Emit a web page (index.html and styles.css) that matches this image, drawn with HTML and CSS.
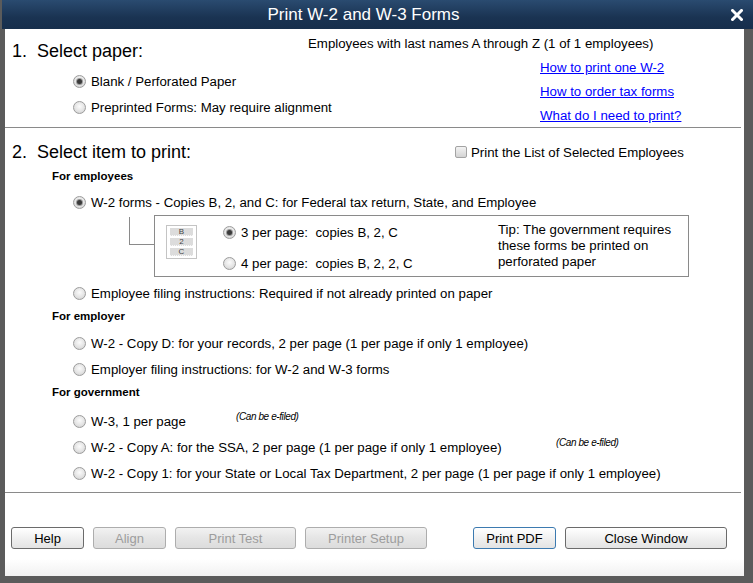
FILE: index.html
```html
<!DOCTYPE html>
<html>
<head>
<meta charset="utf-8">
<link rel="stylesheet" href="styles.css">
</head>
<body>
<div class="frame">
  <div class="titlebar">
    <div class="title">Print W-2 and W-3 Forms</div>
    <div class="close">
      <svg width="12" height="12" viewBox="0 0 12 12"><path d="M1.5 1.5 L10.5 10.5 M10.5 1.5 L1.5 10.5" stroke="#fff" stroke-width="3" stroke-linecap="square"/></svg>
    </div>
  </div>
  <div class="content">
    <section class="sec1">
      <div class="paper">
        <h2 class="heading">1.&nbsp; Select paper:</h2>
        <div class="opt first"><span class="radio checked"></span><span>Blank / Perforated Paper</span></div>
        <div class="opt"><span class="radio"></span><span>Preprinted Forms: May require alignment</span></div>
      </div>
      <div class="info">
        <div class="emp">Employees with last names A through Z (1 of 1 employees)</div>
        <div class="links">
          <a href="#">How to print one W-2</a>
          <a href="#">How to order tax forms</a>
          <a href="#">What do I need to print?</a>
        </div>
      </div>
    </section>
    <hr class="sep">
    <section class="sec2">
      <div class="head2">
        <h2 class="heading">2.&nbsp; Select item to print:</h2>
        <div class="listopt"><span class="check"></span><span>Print the List of Selected Employees</span></div>
      </div>
      <div class="group g-emp">For employees</div>
      <div class="opt o-w2"><span class="radio checked"></span><span>W-2 forms - Copies B, 2, and C: for Federal tax return, State, and Employee</span></div>
      <div class="subrow">
        <div class="connector"></div>
        <div class="subbox">
          <div class="formicon">
            <div class="fi-row">B</div>
            <div class="fi-row">2</div>
            <div class="fi-row">C</div>
          </div>
          <div class="perpage">
            <div class="opt"><span class="radio checked"></span><span>3 per page:&nbsp; copies B, 2, C</span></div>
            <div class="opt"><span class="radio"></span><span>4 per page:&nbsp; copies B, 2, 2, C</span></div>
          </div>
          <div class="tip">Tip: The government requires<br>these forms be printed on<br>perforated paper</div>
        </div>
      </div>
      <div class="opt o-efi"><span class="radio"></span><span>Employee filing instructions: Required if not already printed on paper</span></div>
      <div class="group g-er">For employer</div>
      <div class="opt o-d"><span class="radio"></span><span>W-2 - Copy D: for your records, 2 per page (1 per page if only 1 employee)</span></div>
      <div class="opt"><span class="radio"></span><span>Employer filing instructions: for W-2 and W-3 forms</span></div>
      <div class="group g-gov">For government</div>
      <div class="opt o-w3"><span class="radio"></span><span class="lbl-w3">W-3, 1 per page</span><span class="efile">(Can be e-filed)</span></div>
      <div class="opt"><span class="radio"></span><span class="lbl-a">W-2 - Copy A: for the SSA, 2 per page (1 per page if only 1 employee)</span><span class="efile">(Can be e-filed)</span></div>
      <div class="opt"><span class="radio"></span><span>W-2 - Copy 1: for your State or Local Tax Department, 2 per page (1 per page if only 1 employee)</span></div>
    </section>
    <hr class="sep">
    <footer class="buttons">
      <button class="btn b-help">Help</button>
      <button class="btn b-align" disabled>Align</button>
      <button class="btn b-test" disabled>Print Test</button>
      <button class="btn b-setup" disabled>Printer Setup</button>
      <button class="btn b-pdf focus">Print PDF</button>
      <button class="btn b-close">Close Window</button>
    </footer>
  </div>
</div>
</body>
</html>
```

FILE: styles.css
```css
* { box-sizing: border-box; }
html, body { margin: 0; padding: 0; }
body {
  width: 753px;
  height: 583px;
  background: #5b5b5b;
  font-family: "Liberation Sans", Arial, sans-serif;
  font-size: 13.25px;
  color: #000;
  overflow: hidden;
}
.frame { width: 753px; height: 583px; display: flex; flex-direction: column; }
.titlebar {
  height: 29px;
  display: flex;
  align-items: center;
  background: linear-gradient(#2a4b70, #1a3352 60%, #172f4c);
  margin-left: 2px;
}
.title {
  flex: 1;
  text-align: center;
  color: #fff;
  font-size: 17px;
}
.close { width: 28px; display: flex; justify-content: center; padding-right: 4px; }
.close svg { display: block; }
.content {
  margin: 0 9px 0 5px;
  height: 547px;
  background: linear-gradient(#fff 0, #fff 530px, #f1f1f1 547px);
  display: flex;
  flex-direction: column;
}
.heading {
  margin: 0;
  font-weight: normal;
  font-size: 18px;
  line-height: 20px;
  white-space: pre;
}
.sec1 { height: 98px; display: flex; }
.paper { width: 303px; padding: 12px 0 0 7px; }
.opt {
  height: 26px;
  display: flex;
  align-items: center;
  padding-left: 68px;
  white-space: nowrap;
}
.paper .opt { padding-left: 61px; }
.paper .opt.first { margin-top: 7px; }
.radio {
  width: 13px;
  height: 13px;
  border-radius: 50%;
  border: 1px solid #9c9c9c;
  background: radial-gradient(circle at 50% 40%, #fbfbfb 0, #e4e4e4 55%, #c9c9c9 100%);
  margin-right: 5px;
  flex: none;
  display: flex;
  align-items: center;
  justify-content: center;
}
.radio.checked::after {
  content: "";
  width: 5px;
  height: 5px;
  border-radius: 50%;
  background: #3a3a3a;
  box-shadow: 0 0 0 1px #9a9a9a;
}
.info { padding-top: 7px; }
.emp { line-height: 16px; }
.links { margin-top: 4px; padding-left: 232px; display: flex; flex-direction: column; }
.links a { color: #0000ff; text-decoration: underline; line-height: 24px; height: 24px; }
.sep {
  margin: 0 3px 0 0;
  border: 0;
  height: 1px;
  background: #8a8a8a;
  flex: none;
}
.sec2 { height: 364px; }
.head2 { display: flex; align-items: center; margin-top: 14px; padding-left: 7px; height: 20px; }
.head2 .heading { width: 443px; }
.listopt { display: flex; align-items: center; }
.check {
  width: 12px;
  height: 12px;
  border: 1px solid #a3a3a3;
  border-radius: 2px;
  background: linear-gradient(#f3f3f3, #d3d3d3);
  margin-right: 4px;
}
.group { font-weight: bold; font-size: 11.5px; line-height: 14px; padding-left: 47px; }
.g-emp { margin-top: 7px; }
.o-w2 { margin-top: 6px; }
.subrow { display: flex; align-items: flex-start; }
.connector {
  margin-left: 124px;
  margin-top: 2px;
  width: 25px;
  height: 28px;
  border-left: 1px solid #8a8a8a;
  border-bottom: 1px solid #8a8a8a;
}
.subbox {
  width: 535px;
  height: 62px;
  border: 1px solid #8a8a8a;
  display: flex;
  align-items: flex-start;
}
.formicon {
  margin: 9px 0 0 11px;
  width: 31px;
  height: 34px;
  border: 1px solid #c4c4c4;
  padding: 2px 3px;
  display: flex;
  flex-direction: column;
  gap: 2px;
}
.fi-row {
  height: 8px;
  background: #dcdcdc;
  font-size: 8px;
  line-height: 8px;
  text-align: center;
  color: #444;
  border-bottom: 1px dotted #f8f8f8;
}
.perpage { width: 275px; margin-left: 26px; padding-top: 3px; display: flex; flex-direction: column; gap: 5px; }
.perpage .opt { padding-left: 0; }
.tip { padding-top: 6px; line-height: 16px; }
.o-efi { margin-top: 3px; }
.g-er { margin-top: 3px; }
.o-d { margin-top: 7px; }
.g-gov { margin-top: 3px; }
.o-w3 { margin-top: 9px; }
.efile {
  align-self: flex-start;
  margin-top: 3px;
  font-style: italic;
  font-size: 10px;
  line-height: 12px;
  letter-spacing: -0.4px;
}
.lbl-w3 { width: 145px; }
.lbl-a { width: 465px; }
.buttons {
  display: flex;
  gap: 9px;
  padding: 34px 0 0 6px;
}
.btn {
  height: 22px;
  border: 1px solid #6b6b6b;
  border-radius: 3px;
  background: linear-gradient(#ffffff, #f0f0f0 50%, #e3e3e3);
  font-family: "Liberation Sans", Arial, sans-serif;
  font-size: 13px;
  color: #000;
  padding: 0;
}
.btn:disabled {
  border-color: #adadad;
  color: #9d9d9d;
  background: linear-gradient(#f2f2f2, #e5e5e5 50%, #dcdcdc);
}
.btn.focus { border-color: #3c7ab0; }
.b-help, .b-align { width: 73px; }
.b-test { width: 121px; }
.b-setup { width: 122px; }
.b-pdf { width: 83px; margin-left: 37px; }
.b-close { width: 162px; }
```
